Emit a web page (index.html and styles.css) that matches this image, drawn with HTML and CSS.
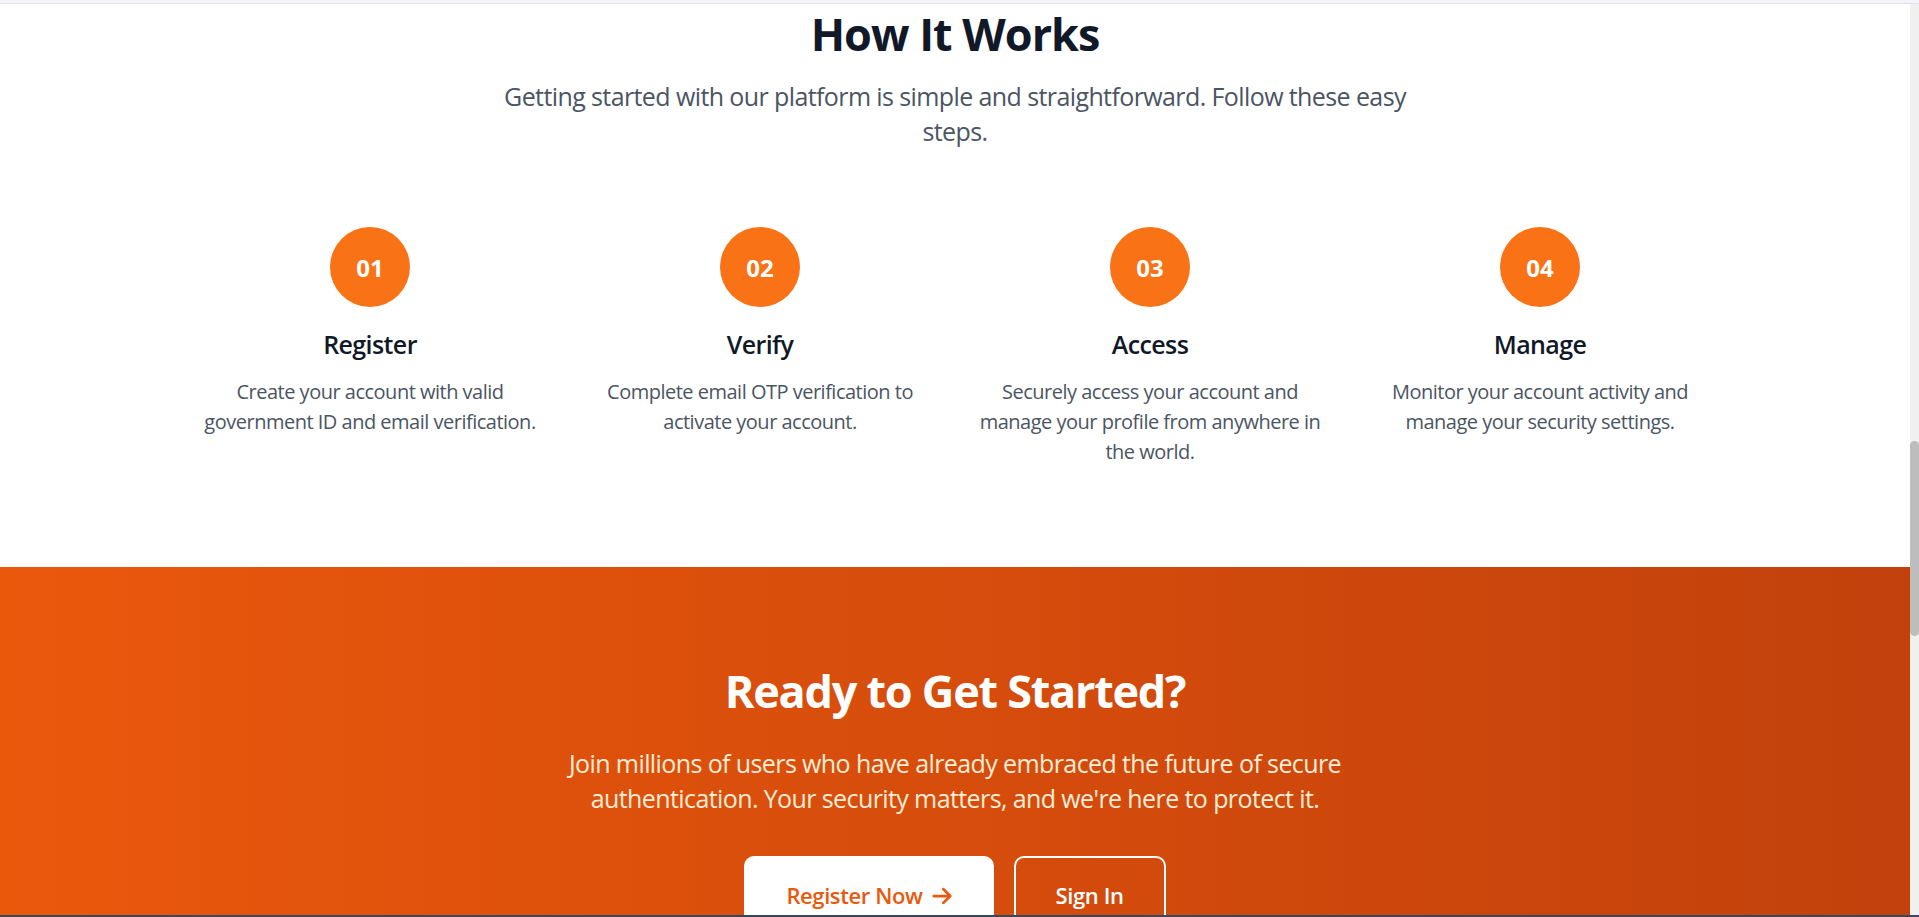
FILE: index.html
```html
<!DOCTYPE html>
<html lang="en">
<head>
<meta charset="utf-8">
<title>How It Works</title>
<link rel="stylesheet" href="styles.css">
</head>
<body>
<div class="frame">
  <div class="topband"></div>
  <div class="viewport">
    <main class="page">
      <section class="how">
        <h2 class="how-title">How It Works</h2>
        <p class="how-lead">Getting started with our platform is simple and straightforward. Follow these easy steps.</p>
        <div class="steps">
          <div class="step">
            <div class="step-num">01</div>
            <h3 class="step-title">Register</h3>
            <p class="step-text">Create your account with valid government ID and email verification.</p>
          </div>
          <div class="step">
            <div class="step-num">02</div>
            <h3 class="step-title">Verify</h3>
            <p class="step-text">Complete email OTP verification to activate your account.</p>
          </div>
          <div class="step">
            <div class="step-num">03</div>
            <h3 class="step-title">Access</h3>
            <p class="step-text">Securely access your account and manage your profile from anywhere in the world.</p>
          </div>
          <div class="step">
            <div class="step-num">04</div>
            <h3 class="step-title">Manage</h3>
            <p class="step-text">Monitor your account activity and manage your security settings.</p>
          </div>
        </div>
      </section>
      <section class="cta">
        <h2 class="cta-title">Ready to Get Started?</h2>
        <p class="cta-text">Join millions of users who have already embraced the future of secure authentication. Your security matters, and we're here to protect it.</p>
        <div class="cta-actions">
          <a class="btn btn-light" href="#">Register Now
            <svg class="btn-arrow" viewBox="0 0 448 512" aria-hidden="true"><path d="M438.6 278.6c12.5-12.5 12.5-32.8 0-45.3l-160-160c-12.5-12.5-32.8-12.5-45.3 0s-12.5 32.8 0 45.3L338.8 224 32 224c-17.7 0-32 14.3-32 32s14.3 32 32 32l306.7 0L233.4 393.4c-12.5 12.5-12.5 32.8 0 45.3s32.8 12.5 45.3 0l160-160z"/></svg>
          </a>
          <a class="btn btn-outline" href="#">Sign In</a>
        </div>
      </section>
    </main>
    <div class="scrollbar"><div class="scrollbar-thumb"></div></div>
  </div>
  <div class="bottomband"></div>
</div>
</body>
</html>
```

FILE: styles.css
```css
* { box-sizing: border-box; }

html, body {
  margin: 0;
  padding: 0;
  background: #ffffff;
}

body {
  font-family: "Open Sans", "Noto Sans", sans-serif;
  -webkit-font-smoothing: antialiased;
}

.frame {
  height: 917px;
  display: flex;
  flex-direction: column;
  overflow: hidden;
}

.topband {
  height: 4px;
  flex: none;
  background: #f5f4fa;
  border-bottom: 1px solid #e2e0ee;
}

.viewport {
  flex: 1;
  display: flex;
  min-height: 0;
}

.page {
  flex: 1;
  min-width: 0;
  overflow: hidden;
}

.scrollbar {
  width: 9px;
  flex: none;
  background: #f0f0f0;
  padding-top: 437px;
}

.scrollbar-thumb {
  height: 195px;
  background: #bdbdbd;
  border-radius: 5px;
}

.bottomband {
  height: 2px;
  flex: none;
  background: #3a4759;
}

/* How it works */
.how {
  padding: 5px 0 100px;
  text-align: center;
}

.how-title {
  margin: 0 0 20px;
  font-size: 45px;
  line-height: 50px;
  font-weight: 700;
  color: #111827;
  letter-spacing: -1px;
}

.how-lead {
  margin: 0 auto 78px;
  max-width: 960px;
  font-size: 25px;
  line-height: 35px;
  color: #4b5563;
  letter-spacing: -0.6px;
}

.steps {
  width: 1520px;
  margin: 0 auto;
  display: grid;
  grid-template-columns: repeat(4, 1fr);
  gap: 40px;
}

.step-num {
  width: 80px;
  height: 80px;
  margin: 0 auto 20px;
  border-radius: 50%;
  background: #f97316;
  color: #ffffff;
  font-size: 24px;
  font-weight: 700;
  display: flex;
  align-items: center;
  justify-content: center;
}

.step-title {
  margin: 0 0 15px;
  font-size: 25px;
  line-height: 35px;
  font-weight: 600;
  color: #111827;
  letter-spacing: -0.6px;
}

.step-text {
  margin: 0;
  font-size: 20px;
  line-height: 30px;
  color: #4b5563;
  letter-spacing: -0.5px;
}

/* CTA */
.cta {
  padding: 99px 0 100px;
  text-align: center;
  background: linear-gradient(to right, #ea580c, #c2410c);
  color: #ffffff;
}

.cta-title {
  margin: 0 0 30px;
  font-size: 45px;
  line-height: 50px;
  font-weight: 700;
  letter-spacing: -1.25px;
}

.cta-text {
  margin: 0 auto 40px;
  max-width: 840px;
  font-size: 25px;
  line-height: 35px;
  color: #ffedd5;
  letter-spacing: -0.6px;
}

.cta-actions {
  display: flex;
  justify-content: center;
  gap: 20px;
}

.btn {
  display: inline-flex;
  align-items: center;
  gap: 9px;
  padding: 20px 40px;
  border: 2px solid #ffffff;
  border-radius: 10px;
  font-size: 22px;
  line-height: 35px;
  font-weight: 600;
  text-decoration: none;
  letter-spacing: -0.4px;
}

.btn-light {
  background: #ffffff;
  color: #ea580c;
}

.btn-arrow {
  width: 20px;
  height: 22px;
  fill: currentColor;
}

.btn-outline {
  background: transparent;
  color: #ffffff;
}
```
